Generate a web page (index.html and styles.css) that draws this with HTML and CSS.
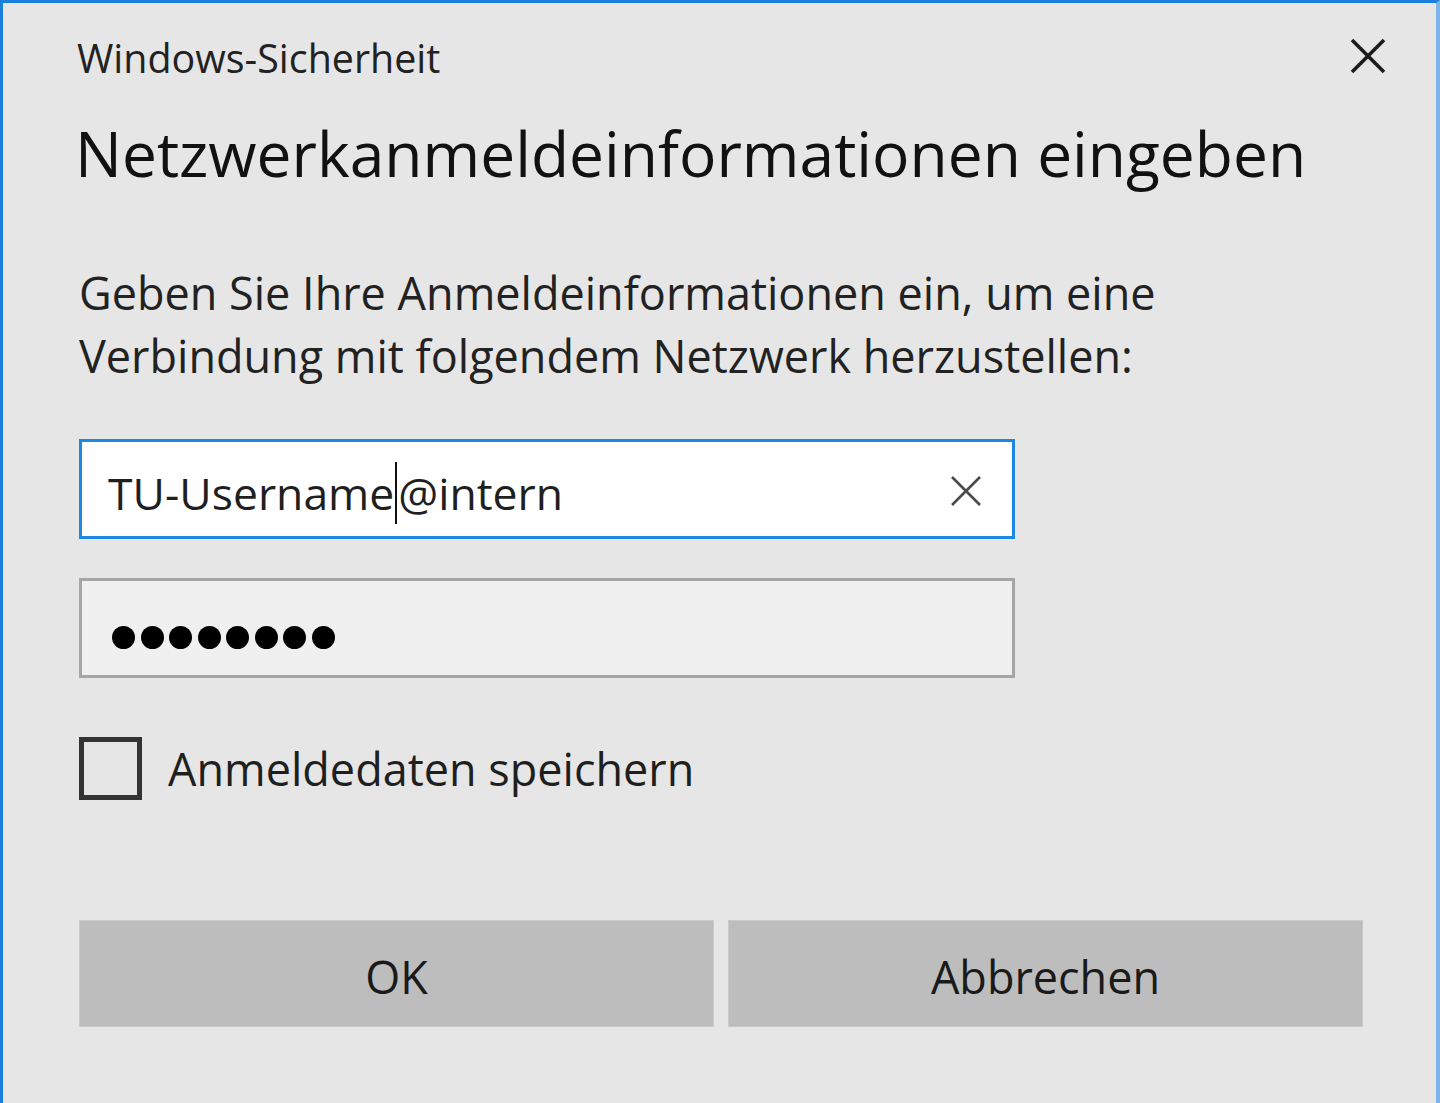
FILE: index.html
```html
<!DOCTYPE html>
<html lang="de">

<head>
    <meta charset="UTF-8">
    <meta name="viewport" content="width=device-width, initial-scale=1.0">
    <title>Windows-Sicherheit</title>
    <link rel="stylesheet" href="styles.css">
</head>

<body>
    <div class="dialog">
        <div class="titlebar">
            <span class="caption">Windows-Sicherheit</span>
            <button class="close" aria-label="Schließen">
                <svg width="36" height="36" viewBox="0 0 36 36">
                    <path d="M2 2 L34 34 M34 2 L2 34" stroke="#1b1b1b" stroke-width="3.6" fill="none" />
                </svg>
            </button>
        </div>

        <h1>Netzwerkanmeldeinformationen eingeben</h1>

        <p class="info">Geben Sie Ihre Anmeldeinformationen ein, um eine<br>Verbindung mit folgendem Netzwerk herzustellen:</p>

        <div class="field active">
            <span class="value">TU-Username<span class="caret"></span>@intern</span>
            <svg class="clear" width="32" height="32" viewBox="0 0 32 32">
                <path d="M2 2 L30 30 M30 2 L2 30" stroke="#4a4a4a" stroke-width="2.6" fill="none" />
            </svg>
        </div>

        <div class="field password">
            <span class="dot"></span><span class="dot"></span><span class="dot"></span><span class="dot"></span>
            <span class="dot"></span><span class="dot"></span><span class="dot"></span><span class="dot"></span>
        </div>

        <label class="remember">
            <span class="box"></span>
            Anmeldedaten speichern
        </label>

        <div class="actions">
            <button class="btn">OK</button>
            <button class="btn">Abbrechen</button>
        </div>
    </div>
</body>

</html>
```

FILE: styles.css
```css
html,
body {
    margin: 0;
    height: 100%;
}

body {
    font-family: "Open Sans", "Noto Sans", sans-serif;
    color: #1a1a1a;
    background: #e6e6e6;
}

.dialog {
    box-sizing: border-box;
    height: 100vh;
    padding: 0 73px;
    background: #e6e6e6;
    border-top: 3px solid #1b7fdb;
    border-left: 3px solid #1b7fdb;
    border-right: 4px solid #7ab4e8;
}

.titlebar {
    display: flex;
    justify-content: space-between;
    align-items: flex-start;
    padding-top: 30px;
    margin-right: -23px;
}

.caption {
    margin-left: 1px;
    font-size: 39.4px;
    line-height: 50px;
    color: #222;
}

.close {
    border: none;
    background: transparent;
    padding: 0;
    margin-top: 5px;
    width: 36px;
    height: 36px;
}

.close svg {
    display: block;
}

h1 {
    margin: 30px 0 0 -1px;
    font-weight: normal;
    font-size: 62.3px;
    line-height: 80px;
    color: #111;
}

.info {
    margin: 68px 0 0 3px;
    font-size: 45px;
    line-height: 63px;
    color: #222;
}

.field {
    box-sizing: border-box;
    width: 936px;
    height: 100px;
    margin-left: 3px;
    display: flex;
    align-items: center;
    border: 3px solid #a6a6a6;
    background: #f0f0f0;
}

.field.active {
    margin-top: 52px;
    justify-content: space-between;
    padding: 8px 30px 0 26px;
    border-color: #1e86e3;
    background: #fff;
}

.value {
    font-size: 44.5px;
    color: #1f1f1f;
}

.caret {
    display: inline-block;
    width: 2px;
    height: 62px;
    margin: 0 1px;
    background: #111;
    vertical-align: -14px;
}

.clear {
    display: block;
    margin-top: -4px;
}

.field.password {
    margin-top: 39px;
    padding-left: 30px;
    gap: 5.5px;
}

.dot {
    width: 23px;
    height: 23px;
    border-radius: 50%;
    background: #000;
    margin-top: 18px;
}

.remember {
    display: flex;
    align-items: center;
    gap: 26px;
    margin: 59px 0 0 3px;
    font-size: 45px;
    color: #1f1f1f;
}

.box {
    box-sizing: border-box;
    width: 63px;
    height: 63px;
    border: 5px solid #333;
}

.actions {
    display: flex;
    gap: 14px;
    margin: 120px 0 0 3px;
}

.btn {
    flex: 1;
    height: 107px;
    border: 1px solid #cacaca;
    background: #bdbdbd;
    font-family: inherit;
    font-size: 45px;
    color: #1a1a1a;
    padding: 6px 0 0 0;
}
```
